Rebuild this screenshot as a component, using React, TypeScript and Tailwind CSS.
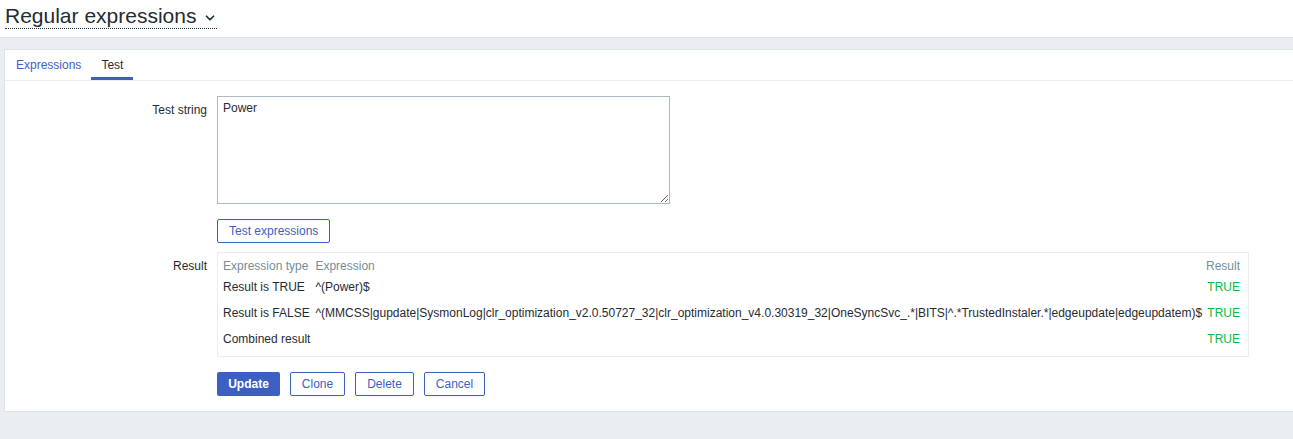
import { ChevronDown } from "lucide-react";

const rows = [
  { type: "Result is TRUE", expr: "^(Power)$", result: "TRUE" },
  {
    type: "Result is FALSE",
    expr: "^(MMCSS|gupdate|SysmonLog|clr_optimization_v2.0.50727_32|clr_optimization_v4.0.30319_32|OneSyncSvc_.*|BITS|^.*TrustedInstaler.*|edgeupdate|edgeupdatem)$",
    result: "TRUE",
  },
];

export default function App() {
  return (
    <div className="h-[439px] flex flex-col bg-[#ebeef0] text-[12px] text-[#1f2c33] font-['Liberation_Sans',Arial,sans-serif] overflow-hidden">
      <header className="h-[38px] shrink-0 bg-white border-b border-[#dfe4e7] px-[5px] pt-[4px]">
        <h1 className="inline-flex items-center gap-[7px] text-[21px] leading-[24px] text-[#1f2c33] border-b border-dotted border-[#1f2c33]">
          Regular expressions
          <ChevronDown className="w-[14px] h-[14px] mt-[3px]" strokeWidth={3} />
        </h1>
      </header>

      <main className="mt-[11px] ml-[4px] h-[363px] bg-white border border-r-0 border-[#dfe4e7]">
        <nav className="flex h-[31px] border-b border-[#ebeef0] pl-[1px]">
          <a className="px-[10px] pt-[6px] text-[#3c5fc4]">Expressions</a>
          <a className="px-[10px] pt-[6px] text-[#1f2c33] border-b-[3px] border-[#3c5fc4]">Test</a>
        </nav>

        <div className="grid grid-cols-[202px_1fr] gap-x-[10px] pt-[15px]">
          <label className="text-right pt-[5px]">Test string</label>
          <div>
            <textarea
              defaultValue="Power"
              className="block w-[453px] h-[108px] border border-[#acbbc2] px-[5px] py-[4px] leading-[14px] outline-none resize"
            />
            <button className="mt-[15px] h-[24px] px-[11px] border border-[#3c5fc4] rounded-[2px] text-[#3c5fc4]">
              Test expressions
            </button>
          </div>

          <label className="text-right pt-[5px] mt-[9px]">Result</label>
          <div className="mt-[9px]">
            <div className="w-[1032px] border border-[#ebeef0] pl-[5px] pr-[8px] py-[4px]">
              <table className="w-full border-collapse">
                <thead>
                  <tr className="text-[#768d99] align-top">
                    <th className="font-normal text-left pr-[5px] whitespace-nowrap leading-[16px] pt-[1px]">Expression type</th>
                    <th className="font-normal text-left w-full leading-[16px] pt-[1px]">Expression</th>
                    <th className="font-normal text-right leading-[16px] pt-[1px]">Result</th>
                  </tr>
                </thead>
                <tbody>
                  {rows.map((r) => (
                    <tr key={r.type} className="h-[26px]">
                      <td className="pr-[5px] whitespace-nowrap">{r.type}</td>
                      <td className="whitespace-nowrap">{r.expr}</td>
                      <td className="text-right text-[#12b83c] pl-[5px]">{r.result}</td>
                    </tr>
                  ))}
                  <tr className="h-[26px]">
                    <td className="pr-[5px] whitespace-nowrap">Combined result</td>
                    <td />
                    <td className="text-right text-[#12b83c] pl-[5px]">TRUE</td>
                  </tr>
                </tbody>
              </table>
            </div>

            <div className="flex gap-[10px] mt-[15px]">
              <button className="h-[24px] w-[63px] rounded-[2px] bg-[#3c5fc4] text-white font-bold">
                Update
              </button>
              <button className="h-[24px] w-[55px] border border-[#3c5fc4] rounded-[2px] text-[#3c5fc4]">
                Clone
              </button>
              <button className="h-[24px] w-[59px] border border-[#3c5fc4] rounded-[2px] text-[#3c5fc4]">
                Delete
              </button>
              <button className="h-[24px] w-[61px] border border-[#3c5fc4] rounded-[2px] text-[#3c5fc4]">
                Cancel
              </button>
            </div>
          </div>
        </div>
      </main>
    </div>
  );
}
